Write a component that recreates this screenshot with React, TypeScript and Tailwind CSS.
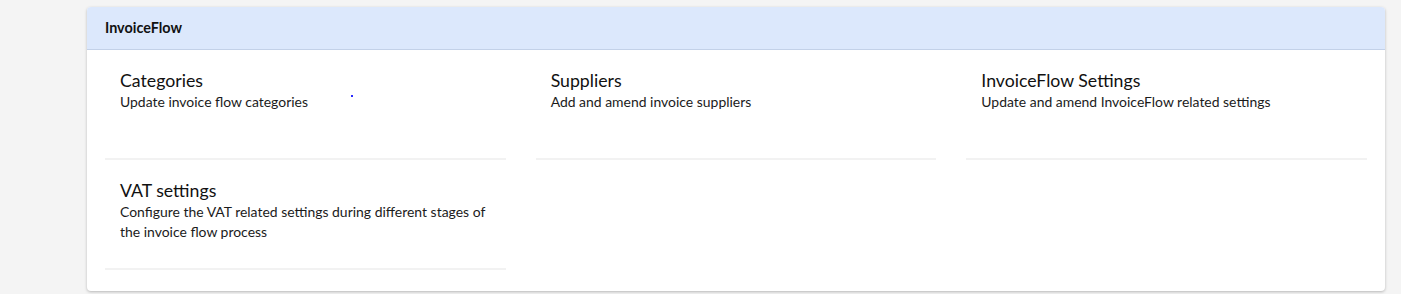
import React from "react";

const tiles = [
  { title: "Categories", desc: "Update invoice flow categories", dot: true },
  { title: "Suppliers", desc: "Add and amend invoice suppliers" },
  { title: "InvoiceFlow Settings", desc: "Update and amend InvoiceFlow related settings" },
  { title: "VAT settings", desc: "Configure the VAT related settings during different stages of the invoice flow process" },
];

export default function App() {
  return (
    <div className="min-h-screen bg-[#f4f4f4] pt-[7px] pl-[87px] font-['Lato','Noto_Sans',sans-serif] text-[#1b1b1b]">
      <div className="w-[1298px] rounded-[4px] bg-white shadow-[0_1px_3px_rgba(0,0,0,0.25)] overflow-hidden">
        <div className="h-[43px] bg-[#dce8fc] border-b border-[#c3d1e8] px-[18px] flex items-center">
          <span className="text-[14.4px] font-bold text-[#111]">InvoiceFlow</span>
        </div>
        <div className="grid grid-cols-3 gap-x-[30px] px-[18px] pb-[21px]">
          {tiles.map((t) => (
            <div key={t.title} className="relative h-[110px] border-b-2 border-[#f2f2f2] px-[15px] pt-[20px]">
              <div className="text-[17.7px] leading-[22px] text-[#111]">{t.title}</div>
              <div className="text-[13.95px] leading-[20px] text-[#1b1b1b]">{t.desc}</div>
              {t.dot && <div className="absolute left-[246px] top-[45px] w-[2px] h-[2px] bg-[#2a2aff]" />}
            </div>
          ))}
        </div>
      </div>
    </div>
  );
}
